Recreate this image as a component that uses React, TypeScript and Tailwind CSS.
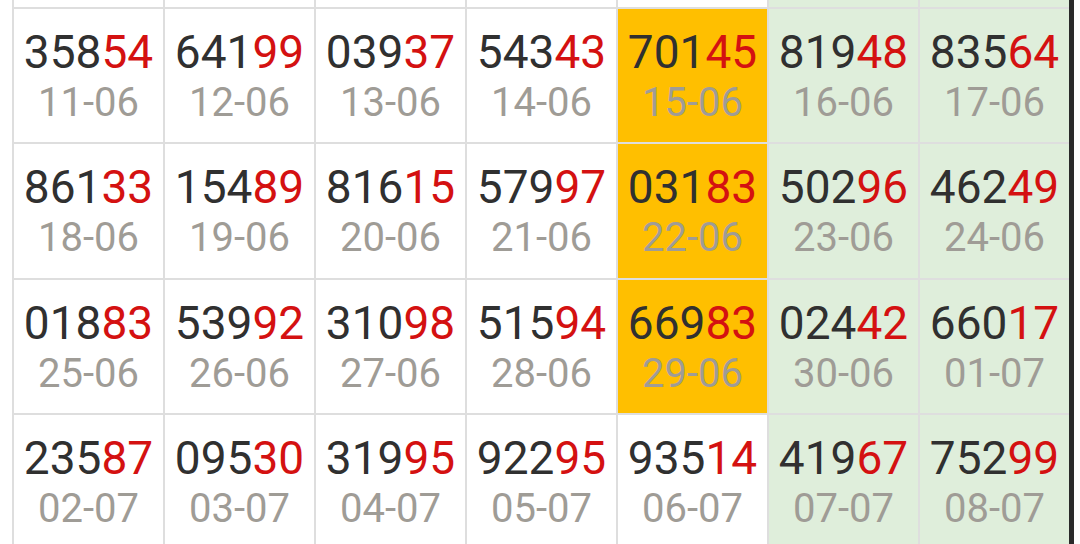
const rows: { n: string; d: string; hl?: boolean }[][] = [
  [
    { n: "35854", d: "11-06" },
    { n: "64199", d: "12-06" },
    { n: "03937", d: "13-06" },
    { n: "54343", d: "14-06" },
    { n: "70145", d: "15-06", hl: true },
    { n: "81948", d: "16-06" },
    { n: "83564", d: "17-06" },
  ],
  [
    { n: "86133", d: "18-06" },
    { n: "15489", d: "19-06" },
    { n: "81615", d: "20-06" },
    { n: "57997", d: "21-06" },
    { n: "03183", d: "22-06", hl: true },
    { n: "50296", d: "23-06" },
    { n: "46249", d: "24-06" },
  ],
  [
    { n: "01883", d: "25-06" },
    { n: "53992", d: "26-06" },
    { n: "31098", d: "27-06" },
    { n: "51594", d: "28-06" },
    { n: "66983", d: "29-06", hl: true },
    { n: "02442", d: "30-06" },
    { n: "66017", d: "01-07" },
  ],
  [
    { n: "23587", d: "02-07" },
    { n: "09530", d: "03-07" },
    { n: "31995", d: "04-07" },
    { n: "92295", d: "05-07" },
    { n: "93514", d: "06-07" },
    { n: "41967", d: "07-07" },
    { n: "75299", d: "08-07" },
  ],
];

function cellBg(col: number, hl?: boolean) {
  if (hl) return "bg-[#ffbf00]";
  if (col >= 5) return "bg-[#dfeedb]";
  return "bg-white";
}

export default function App() {
  return (
    <div className="flex h-[544px] w-[1080px] overflow-hidden bg-white font-['Roboto',sans-serif]">
      <div className="w-[12px] shrink-0" />
      <div className="grid w-[1057px] shrink-0 grid-cols-[repeat(7,151px)] grid-rows-[7px_135px_136px_135px_136px]">
        {/* tail of the previous row */}
        {Array.from({ length: 7 }).map((_, c) => (
          <div key={c} className={`border-l-2 border-[#dedede] ${cellBg(c)}`} />
        ))}
        {rows.flat().map((cell, i) => (
          <div
            key={cell.d}
            className={`flex flex-col items-center border-t-2 border-l-2 border-[#dedede] pt-[18px] ${cellBg(i % 7, cell.hl)}`}
          >
            <div className="whitespace-nowrap text-[46px] leading-[50px] text-[#303030]">
              {cell.n.slice(0, 3)}
              <span className="text-[#d41111]">{cell.n.slice(3)}</span>
            </div>
            <div className="mt-[4px] whitespace-nowrap text-[40px] leading-[44px] text-[#9f9c96]">{cell.d}</div>
          </div>
        ))}
      </div>
      <div className="w-[5px] shrink-0 bg-[#2a2a2a]" />
      <div className="flex-1 bg-white" />
    </div>
  );
}
